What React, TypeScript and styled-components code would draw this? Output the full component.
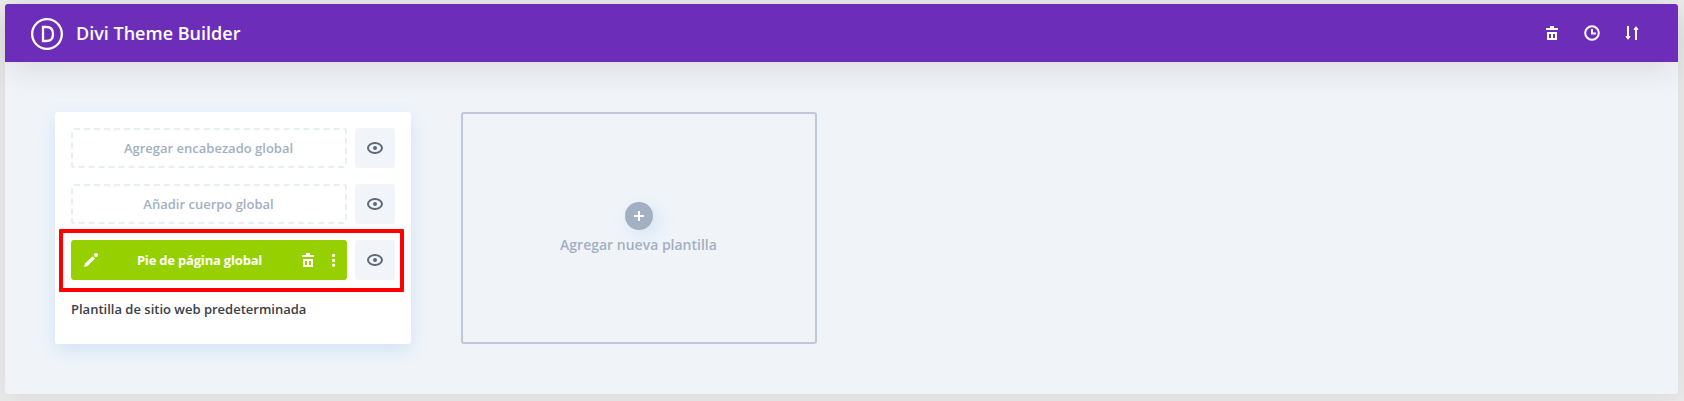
import React from "react";
import styled, { createGlobalStyle } from "styled-components";

const GlobalStyle = createGlobalStyle`
  *, *::before, *::after { box-sizing: border-box; }
  body {
    margin: 0;
    background: #ebebeb;
    font-family: "Open Sans", "Noto Sans", sans-serif;
    overflow: hidden;
  }
`;

const Page = styled.div`
  height: 401px;
  padding: 4px 6px 7px 5px;
`;

const Panel = styled.div`
  height: 390px;
  display: flex;
  flex-direction: column;
  border-radius: 3px;
  background: #f0f4f9;
  box-shadow: 0 5px 30px rgba(0, 0, 0, 0.08);
`;

const Header = styled.header`
  height: 58px;
  flex: none;
  display: flex;
  align-items: center;
  padding: 2px 38px 0 26px;
  border-radius: 3px 3px 0 0;
  background: #6c2eb9;
  box-shadow: 0 10px 34px -4px rgba(0, 0, 0, 0.11);
`;

const Logo = styled.svg`
  width: 32px;
  height: 32px;
  flex: none;
`;

const Title = styled.h1`
  margin: -2px auto 0 13px;
  color: #fff;
  font-size: 18px;
  line-height: 24px;
  font-weight: 600;
`;

const Actions = styled.nav`
  display: flex;
  gap: 24px;
  margin-top: -2px;
`;

const IconButton = styled.button`
  display: flex;
  width: 16px;
  height: 16px;
  padding: 0;
  border: 0;
  background: none;
  color: #fff;
`;

const Glyph = styled.svg`
  display: block;
  width: 16px;
  height: 16px;
  flex: none;
  overflow: visible;
`;

const Templates = styled.main`
  display: flex;
  gap: 50px;
  padding: 50px;
`;

const Card = styled.section`
  position: relative;
  width: 356px;
  height: 232px;
  display: flex;
  flex-direction: column;
  gap: 16px;
  padding: 16px;
  border-radius: 3px;
  background: #fff;
  box-shadow: 0 6px 18px rgba(43, 135, 218, 0.15);
`;

const Row = styled.div`
  display: flex;
  gap: 8px;
`;

const EmptyLayout = styled.button`
  width: 276px;
  height: 40px;
  padding: 0 1px 1px 0;
  border: 2px dashed #e7eef5;
  border-radius: 3px;
  background: #fff;
  color: #a2b0c1;
  font: 600 13px/18px "Open Sans", sans-serif;
`;

const FilledLayout = styled.div`
  width: 276px;
  height: 40px;
  display: flex;
  align-items: center;
  padding: 0 5px 0 12px;
  border-radius: 3px;
  background: #97d000;
  color: #fff;
`;

const LayoutName = styled.span`
  flex: 1;
  padding: 0 0 1px 0;
  text-align: center;
  font-size: 13px;
  line-height: 18px;
  font-weight: 700;
  letter-spacing: -0.19px;
`;

const LayoutTools = styled.div`
  display: flex;
  gap: 10px;
`;

const EyeButton = styled.button`
  display: flex;
  align-items: center;
  justify-content: center;
  width: 40px;
  height: 40px;
  padding: 0;
  border: 0;
  border-radius: 3px;
  background: #f1f4f9;
  color: #5c6978;
`;

const CardName = styled.div`
  margin-top: 4px;
  color: #3a4047;
  font-size: 13px;
  line-height: 18px;
  font-weight: 600;
`;

const Highlight = styled.div`
  position: absolute;
  left: 4px;
  top: 117px;
  width: 345px;
  height: 63px;
  border: 4px solid #ff0000;
  border-radius: 1px;
  pointer-events: none;
`;

const AddCard = styled.button`
  width: 356px;
  height: 232px;
  display: flex;
  flex-direction: column;
  align-items: center;
  justify-content: flex-start;
  padding: 88px 0 0;
  border: 2px solid #bec9d5;
  border-radius: 3px;
  background: transparent;
  color: #a2b0c1;
  font: 600 14px/20px "Open Sans", sans-serif;
`;

const AddLabel = styled.span`
  padding-right: 1px;
`;

const PlusCircle = styled.span`
  display: flex;
  align-items: center;
  justify-content: center;
  width: 28px;
  height: 28px;
  margin-bottom: 5px;
  border-radius: 50%;
  background: #a2b0c1;
  color: #fff;
  box-shadow: 5px 5px 20px rgba(43, 135, 218, 0.15);
`;

const Trash = () => (
  <Glyph viewBox="0 0 16 16" fill="currentColor">
    <path d="M6 1h4v2h4v2H2V3h4zM3 7h10v8H3zM5 9v4h2V9zM9 9v4h2V9z" fillRule="evenodd" />
  </Glyph>
);

const Clock = () => (
  <Glyph viewBox="0 0 16 16" fill="none" stroke="currentColor" strokeWidth="2">
    <circle cx="8" cy="8" r="6.8" />
    <path d="M8 4v4.5h4" />
  </Glyph>
);

const Portability = () => (
  <Glyph viewBox="0 0 16 16" fill="none" stroke="currentColor" strokeWidth="2">
    <path d="M4 1v11M12 15V4" />
    <path d="M2 11.5h4L4 14.3zM10 4.5h4L12 1.7z" fill="currentColor" strokeWidth="1" strokeLinejoin="round" />
  </Glyph>
);

const Pencil = () => (
  <Glyph viewBox="0 0 16 16" fill="currentColor">
    <path d="M1 15l1-3.6 7.6-7.2 2.4 2.4L4.6 14z" />
    <circle cx="13" cy="3" r="2.1" />
  </Glyph>
);

const Dots = () => (
  <Glyph viewBox="0 0 16 16" fill="currentColor">
    <rect x="6" y="2" width="3" height="3" rx=".8" />
    <rect x="6" y="7" width="3" height="3" rx=".8" />
    <rect x="6" y="11.7" width="3" height="3" rx=".8" />
  </Glyph>
);

const Eye = () => (
  <Glyph viewBox="0 0 16 16">
    <ellipse cx="8" cy="8" rx="7" ry="5" fill="none" stroke="currentColor" strokeWidth="2" />
    <circle cx="8" cy="8" r="2" fill="currentColor" />
  </Glyph>
);

const Preview = () => (
  <EyeButton aria-label="Vista previa">
    <Eye />
  </EyeButton>
);

export default function App() {
  return (
    <Page>
      <GlobalStyle />
      <Panel>
        <Header>
          <Logo viewBox="0 0 32 32" fill="none" stroke="#fff" strokeWidth="2.3">
            <circle cx="16" cy="16" r="14.85" />
            <path d="M12 9h3.5c4.4 0 6.5 2.8 6.5 7s-2.1 7-6.5 7H12z" />
          </Logo>
          <Title>Divi Theme Builder</Title>
          <Actions>
            <IconButton aria-label="Eliminar"><Trash /></IconButton>
            <IconButton aria-label="Historial"><Clock /></IconButton>
            <IconButton aria-label="Portabilidad"><Portability /></IconButton>
          </Actions>
        </Header>
        <Templates>
          <Card>
            <Row>
              <EmptyLayout>Agregar encabezado global</EmptyLayout>
              <Preview />
            </Row>
            <Row>
              <EmptyLayout>Añadir cuerpo global</EmptyLayout>
              <Preview />
            </Row>
            <Row>
              <FilledLayout>
                <Pencil />
                <LayoutName>Pie de página global</LayoutName>
                <LayoutTools>
                  <Trash />
                  <Dots />
                </LayoutTools>
              </FilledLayout>
              <Preview />
            </Row>
            <CardName>Plantilla de sitio web predeterminada</CardName>
            <Highlight />
          </Card>
          <AddCard>
            <PlusCircle>
              <Glyph viewBox="0 0 16 16" stroke="currentColor" strokeWidth="2">
                <path d="M8 3v10M3 8h10" />
              </Glyph>
            </PlusCircle>
            <AddLabel>Agregar nueva plantilla</AddLabel>
          </AddCard>
        </Templates>
      </Panel>
    </Page>
  );
}
